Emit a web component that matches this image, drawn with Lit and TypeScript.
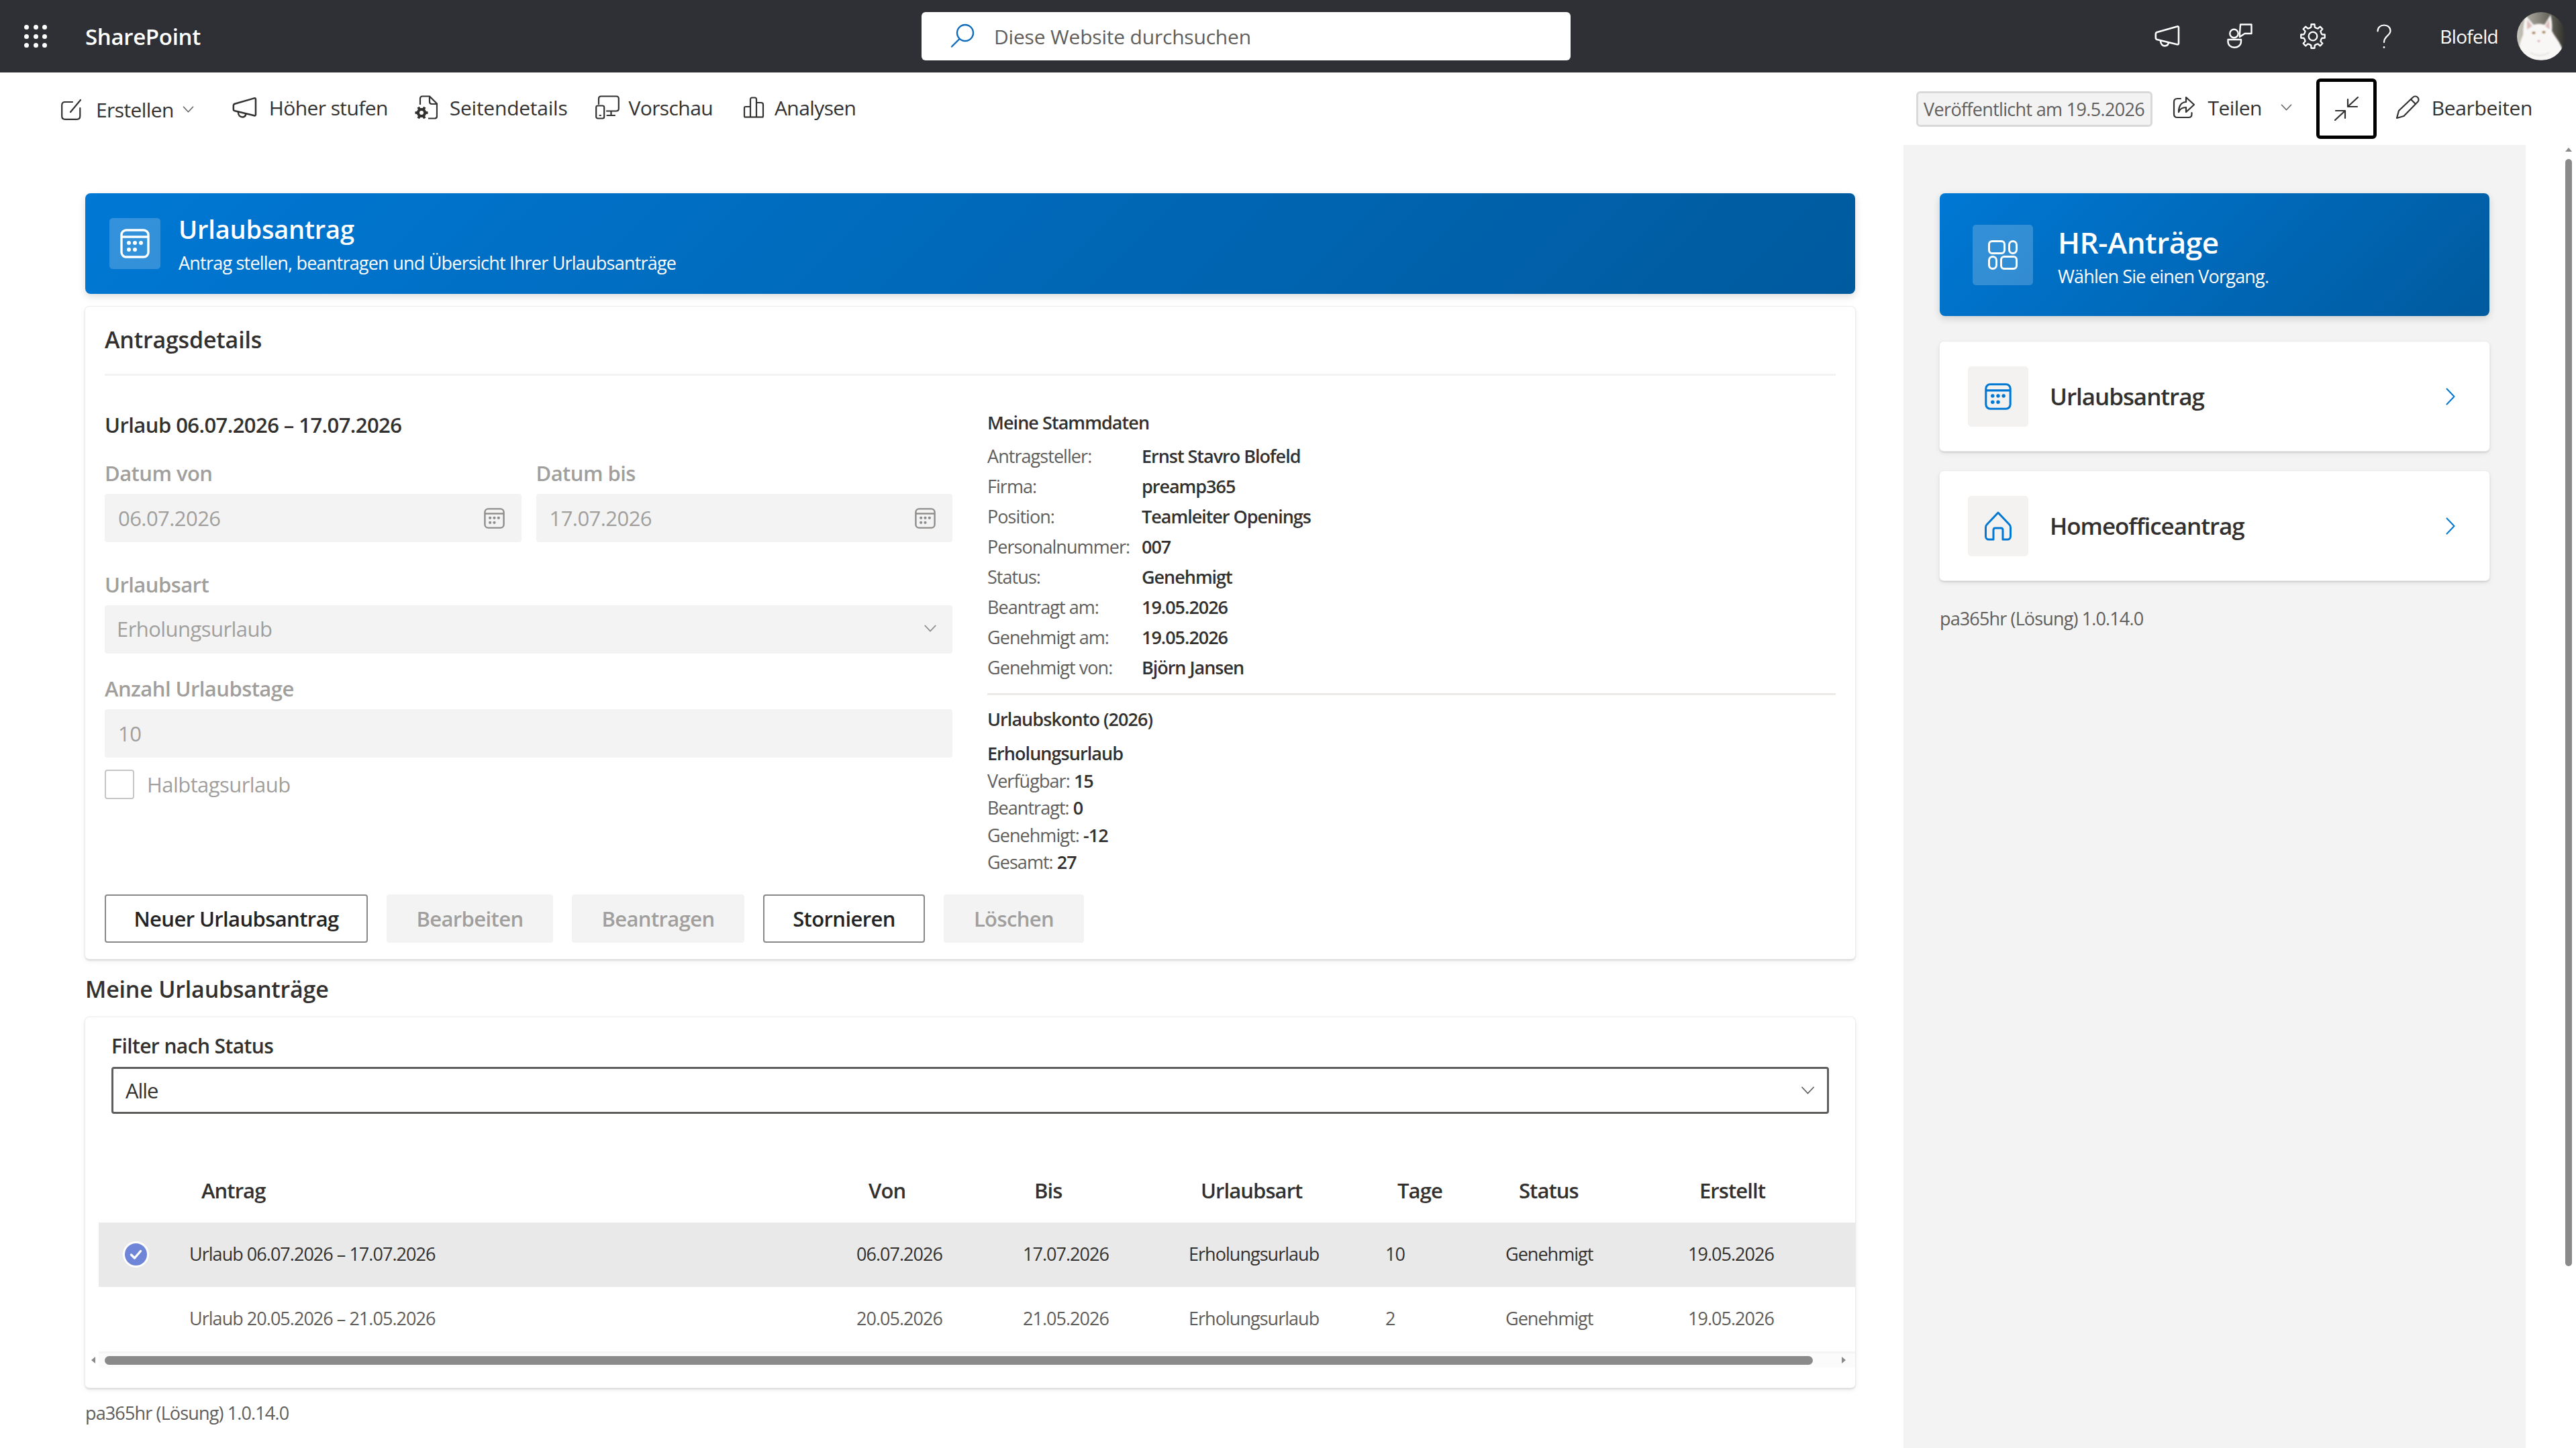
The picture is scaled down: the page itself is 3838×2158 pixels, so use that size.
import { LitElement, html, css } from "lit";
import { customElement } from "lit/decorators.js";

const gearPath = (cx: number, cy: number, teeth: number, r1: number, r2: number) => {
  let d = "";
  const st = (Math.PI * 2) / teeth;
  for (let i = 0; i < teeth; i++) {
    const a = i * st;
    const pts: [number, number][] = [
      [a - st * 0.5, r1], [a - st * 0.26, r1 + (r2 - r1) * 0.1], [a - st * 0.18, r2], [a + st * 0.18, r2], [a + st * 0.26, r1 + (r2 - r1) * 0.1],
    ];
    pts.forEach(([t, r], j) => {
      d += `${i === 0 && j === 0 ? "M" : "L"}${(cx + r * Math.cos(t)).toFixed(1)} ${(cy + r * Math.sin(t)).toFixed(1)} `;
    });
  }
  return d + "Z";
};

const cal = (cls: string) => html`<svg class=${cls} viewBox="0 0 44 44" fill="none">
  <rect x="2" y="2" width="40" height="40" rx="7" stroke="currentColor" stroke-width="3.4"/>
  <path d="M2 12H42" stroke="currentColor" stroke-width="3.4"/>
  <g fill="currentColor"><circle cx="13" cy="21" r="3"/><circle cx="22" cy="21" r="3"/><circle cx="31" cy="21" r="3"/><circle cx="13" cy="31" r="3"/><circle cx="22" cy="31" r="3"/></g>
</svg>`;

const chevDown = (cls: string) => html`<svg class=${cls} viewBox="0 0 20 12" fill="none"><path d="M1.5 1.5L10 10.5L18.5 1.5" stroke="currentColor" stroke-width="1.8" stroke-linecap="round" stroke-linejoin="round"/></svg>`;

const megaphone = (cls: string) => html`<svg class=${cls} viewBox="0 0 38 32" fill="none" stroke="currentColor" stroke-width="2.6" stroke-linejoin="round" stroke-linecap="round">
  <path d="M36 3V26.5C36 27.8 35 28.5 33.8 28.2L4 21C2.6 20.6 1.8 19.6 1.8 18.2V12.8C1.8 11.5 2.6 10.5 3.8 10.1L33.8 1.4C35 1.1 36 1.8 36 3Z"/>
  <path d="M9 22.5C9 27.5 12 30.4 15.5 30.4C18.5 30.4 20.5 28.5 21 25.5"/>
</svg>`;

@customElement("app-root")
export class AppRoot extends LitElement {
  static styles = css`
    :host { display: block; width: 3838px; height: 2158px; overflow: hidden; position: relative; background: #fff;
      font-family: "Open Sans", "Noto Sans", "Liberation Sans", sans-serif; color: #323130; letter-spacing: -0.012em; }
    svg { display: block; flex: none; }
    .topbar { height: 108px; background: #2e3036; display: flex; align-items: center; color: #fff; position: relative; }
    .waffle { margin-left: 36px; width: 34px; height: 34px; display: grid; grid-template-columns: repeat(3, 7px); grid-auto-rows: 7px; justify-content: space-between; align-content: space-between; }
    .waffle i { background: #fff; border-radius: 50%; }
    .brand { margin-left: 57px; font-size: 33px; font-weight: 600; letter-spacing: -0.01em; }
    .search { position: absolute; left: 1373px; top: 18px; width: 967px; height: 72px; background: #fff; border-radius: 6px; display: flex; align-items: center; color: #605e5c; font-size: 30px; box-sizing: border-box; padding-left: 42px; }
    .search .ic { width: 38px; height: 38px; color: #0f6cbd; margin-right: 28px; }
    .top-right { margin-left: auto; display: flex; align-items: center; padding-right: 16px; }
    .tr-mega { width: 38px; height: 32px; }
    .tr-person { width: 38px; height: 38px; margin-left: 70px; }
    .tr-gear { width: 38px; height: 38px; margin-left: 71px; }
    .tr-q { width: 22px; height: 37px; margin-left: 76px; }
    .user { font-size: 28px; margin-left: 72px; letter-spacing: -0.024em; }
    .avatar { width: 72px; height: 72px; margin-left: 28px; border-radius: 50%; overflow: hidden; }

    .cmd { height: 108px; display: flex; align-items: center; font-size: 30px; letter-spacing: -0.02em; position: relative; }
    .cmd-left { display: flex; align-items: center; padding-left: 91px; position: relative; top: -2px; }
    .ci { display: flex; align-items: center; color: #323130; }
    .ci svg.i { color: #323130; }
    .ci.c1 { position: relative; top: 3px; }
    .i-edit { width: 30px; height: 32px; margin-right: 22px; }
    .i-mega { width: 37px; height: 31px; margin-right: 18px; }
    .i-doc { width: 34px; height: 36px; margin-right: 18px; }
    .i-dev { width: 36px; height: 36px; margin-right: 13px; }
    .i-chart { width: 32px; height: 32px; margin-right: 15px; }
    .c1 { margin-right: 57px; } .c2 { margin-right: 40px; } .c3 { margin-right: 42px; letter-spacing: -0.008em; } .c4 { margin-right: 45px; }
    .dn { width: 17px; height: 10px; margin-left: 13px; color: #605e5c; }
    .cmd-right { margin-left: auto; display: flex; align-items: center; position: relative; top: -2px; }
    .badge { width: 352px; height: 53px; box-sizing: border-box; border: 3px solid #d9d9d9; background: #f3f3f3; border-radius: 6px; font-size: 27px; letter-spacing: -0.025em; color: #5f5f5f; display: flex; align-items: center; justify-content: center; white-space: nowrap; margin-right: 30px; position: relative; top: 2px; }
    .i-share { width: 34px; height: 34px; margin-right: 19px; }
    .focus { width: 90px; height: 90px; box-sizing: border-box; border: 5px solid #000; border-radius: 6px; display: flex; align-items: center; justify-content: center; margin: 0 28px 0 36px; position: relative; top: 2px; }
    .i-coll { width: 36px; height: 36px; }
    .i-pencil { width: 36px; height: 36px; margin-right: 18px; }
    .cmd-right .dn { margin-left: 28px; }
    .edit-label { letter-spacing: -0.012em; }
    .cmd-end { width: 65px; }

    .content { display: grid; grid-template-columns: 2836px 927px; height: 1942px; }
    .main { padding: 72px 72px 0 127px; display: flex; flex-direction: column; }
    .side { background: #f3f3f3; padding: 72px 54px 0 54px; display: flex; flex-direction: column; }

    .banner { background: linear-gradient(135deg, #0078d4, #005a9e); border-radius: 8px; color: #fff; box-shadow: 0 4px 12px rgba(0,0,0,.14); display: flex; align-items: center; }
    .banner.big { height: 150px; padding-left: 36px; gap: 27px; }
    .banner .box { background: rgba(255,255,255,.2); border-radius: 5px; display: flex; align-items: center; justify-content: center; }
    .big .box { width: 76px; height: 76px; }
    .big .ic { width: 44px; height: 44px; }
    .b-title { font-weight: 600; }
    .big .b-title { font-size: 38px; line-height: 48px; }
    .big .b-sub { font-size: 27px; line-height: 36px; margin-top: 9px; letter-spacing: -0.029em; }

    .card { background: #fff; border-radius: 6px; box-shadow: 0 0 0 1px #ececec, 0 2px 3px rgba(0,0,0,.16), 0 3px 8px rgba(0,0,0,.08); }
    .details { margin-top: 19px; height: 972px; box-sizing: border-box; padding: 0 29px; display: flex; flex-direction: column; }
    .d-title { height: 103px; box-sizing: border-box; border-bottom: 3px solid #f3f3f3; font-size: 34px; font-weight: 600; display: flex; align-items: center; padding-bottom: 2px; flex: none; }
    .d-cols { display: grid; grid-template-columns: 1263px 1fr; column-gap: 52px; flex: 1; }
    .d-left { display: flex; flex-direction: column; letter-spacing: -0.035em; }
    .req { font-size: 31px; font-weight: 600; margin-top: 52px; line-height: 42px; }
    .flab { font-size: 31px; font-weight: 600; color: #a19f9d; line-height: 42px; }
    .two { display: grid; grid-template-columns: 620.5px 620.5px; column-gap: 22px; margin-top: 30px; }
    .inp { height: 72px; background: #f3f3f3; border-radius: 4px; margin-top: 10px; display: flex; align-items: center; padding: 0 25px 0 20px; color: #a19f9d; font-size: 31px; justify-content: space-between; box-sizing: border-box; }
    .inp .c { width: 31px; height: 33px; color: #8f8d8b; }
    .inp .d { width: 20px; height: 11px; color: #8f8d8b; margin-right: -2px; }
    .inp.sel { padding-bottom: 3px; padding-left: 18px; }
    .mt40 { margin-top: 42px; }
    .mt32 { margin-top: 31px; }
    .chk { display: flex; align-items: center; gap: 19px; margin-top: 18px; color: #a19f9d; font-size: 31px; }
    .chk i { width: 44px; height: 44px; box-sizing: border-box; border: 2px solid #c8c6c4; border-radius: 4px; }
    .d-right { font-size: 27px; padding-top: 47px; letter-spacing: -0.035em; }
    .rh { font-weight: 600; line-height: 45px; }
    .kv { display: grid; grid-template-columns: 230px 1fr; grid-auto-rows: 45px; align-items: center; margin-top: 5px; }
    .kv span { color: #605e5c; white-space: nowrap; }
    .kv b { font-weight: 600; letter-spacing: -0.038em; }
    .sep { height: 3px; background: #edebe9; margin: 16px 0 13px; }
    .uk { line-height: 40.5px; }
    .uk div { color: #605e5c; }
    .uk b { font-weight: 600; color: #323130; }
    .uk .h { font-weight: 600; color: #323130; margin-top: 9px; }
    .btns { display: flex; gap: 28px; padding-bottom: 24px; letter-spacing: -0.038em; }
    .btn { height: 72px; box-sizing: border-box; border-radius: 4px; font-size: 31px; font-weight: 600; display: flex; align-items: center; justify-content: center; }
    .btn.on { background: #fff; border: 2.5px solid #8a8886; color: #242424; }
    .btn.off { background: #f3f3f3; color: #a19f9d; }

    .list-h { font-size: 34px; font-weight: 600; margin-top: 22px; line-height: 46px; }
    .list { margin-top: 19px; height: 552px; position: relative; padding-left: 39px; padding-right: 39px; box-sizing: border-box; }
    .f-lab { font-size: 30px; font-weight: 600; padding-top: 22px; line-height: 42px; letter-spacing: -0.02em; }
    .f-sel { margin-top: 10px; height: 70px; border: 3px solid #605e5c; border-radius: 4px; box-sizing: border-box; display: flex; align-items: center; justify-content: space-between; padding: 0 18px; font-size: 31px; letter-spacing: -0.035em; }
    .f-sel svg { width: 21px; height: 12px; color: #605e5c; }
    .table { position: absolute; left: 20px; right: 0; top: 230px; }
    .tr { display: grid; grid-template-columns: 135px 994px 248px 247px 293px 179px 272px 1fr; }
    .th { height: 76px; padding-bottom: 20px; box-sizing: border-box; align-items: center; font-size: 31px; font-weight: 600; color: #323130; letter-spacing: -0.03em; }
    .th div:nth-child(2) { padding-left: 18px; } .th div:nth-child(3) { padding-left: 18px; } .th div:nth-child(4) { padding-left: 17px; }
    .th div:nth-child(5) { padding-left: 18px; } .th div:nth-child(6) { padding-left: 18px; } .th div:nth-child(7) { padding-left: 20px; } .th div:nth-child(8) { padding-left: 17px; }
    .row { height: 96px; padding-bottom: 4px; box-sizing: border-box; align-items: center; font-size: 27px; color: #605e5c; letter-spacing: -0.036em; }
    .row.sel { background: #e9e9e9; color: #323130; }
    .row > div { white-space: nowrap; }
    .tick { width: 39px; height: 39px; margin-left: 36px; margin-top: 3px; }
    .hs { position: absolute; left: 20px; right: 0; top: 498px; height: 24px; border-top: 3px solid #f5f5f5; background: #fbfbfb; display: flex; align-items: center; box-sizing: border-box; }
    .hs .th-b { position: absolute; top: 4px; height: 13px; width: 2545px; left: 9px; background: #8a8a8a; border-radius: 7px; }
    .arr { position: absolute; top: 5px; width: 0; height: 0; border-top: 5px solid transparent; border-bottom: 5px solid transparent; }
    .arr.l { left: -11px; border-right: 6px solid #8a8a8a; }
    .arr.r { right: 14px; border-left: 6px solid #8a8a8a; }
    .ver { font-size: 27px; color: #605e5c; letter-spacing: -0.032em; }
    .main .ver { margin-top: 19px; line-height: 38px; }

    .banner.hr { height: 183px; padding-left: 49px; gap: 37px; border-radius: 8px; }
    .hr .box { width: 90px; height: 90px; }
    .hr .ic { width: 44px; height: 44px; }
    .hr .b-title { font-size: 44px; line-height: 56px; margin-top: 3px; letter-spacing: -0.01em; }
    .hr .b-sub { font-size: 27px; line-height: 36px; margin-top: 5px; letter-spacing: -0.03em; }
    .link { height: 163px; display: flex; align-items: center; padding: 0 51px 0 42px; margin-top: 38px; font-size: 35px; font-weight: 600; letter-spacing: -0.03em; }
    .link + .link { margin-top: 30px; }
    .link .box { width: 90px; height: 90px; background: #f3f2f1; border-radius: 5px; display: flex; align-items: center; justify-content: center; color: #0078d4; margin-right: 32px; }
    .link .box svg { width: 40px; height: 44px; }
    .link .go { margin-left: auto; width: 14px; height: 26px; color: #0078d4; }
    .side .ver { margin-top: 38px; line-height: 38px; }

    .vs { position: absolute; right: 6px; top: 220px; width: 10px; }
    .vs i { display: block; width: 0; height: 0; border-left: 5px solid transparent; border-right: 5px solid transparent; border-bottom: 6px solid #8a8a8a; }
    .vs b { display: block; margin-top: 11px; width: 10px; height: 1650px; border-radius: 5px; background: #8a8a8a; }
  `;

  render() {
    const row = (sel: boolean, a: string, v: string, b: string, t: string) => html`
      <div class="tr row ${sel ? "sel" : ""}">
        <div>${sel ? html`<svg class="tick" viewBox="0 0 39 39"><circle cx="19.5" cy="19.5" r="18" fill="#6f86d8" stroke="#fff" stroke-width="3"/><path d="M12.5 20L17.5 25L26.5 14.5" fill="none" stroke="#fff" stroke-width="3.4" stroke-linecap="round" stroke-linejoin="round"/></svg>` : ""}</div>
        <div>${a}</div><div>${v}</div><div>${b}</div><div>Erholungsurlaub</div><div>${t}</div><div>Genehmigt</div><div>19.05.2026</div>
      </div>`;
    return html`
      <div class="topbar">
        <div class="waffle">${Array.from({ length: 9 }, () => html`<i></i>`)}</div>
        <div class="brand">SharePoint</div>
        <div class="search">
          <svg class="ic" viewBox="0 0 38 38" fill="none" stroke="currentColor" stroke-width="2.4" stroke-linecap="round"><circle cx="23" cy="14" r="12"/><path d="M14.5 23L3 34.5"/></svg>
          Diese Website durchsuchen
        </div>
        <div class="top-right">
          ${megaphone("tr-mega")}
          <svg class="tr-person" viewBox="0 0 38 38" fill="none" stroke="currentColor" stroke-width="2.4" stroke-linejoin="round"><circle cx="10.5" cy="15" r="6.2"/><path d="M1.5 24H21V27C21 32.5 16 35.8 11 35.8C6 35.8 1.5 32.5 1.5 27Z"/><path d="M20 1.5H36.5V15H26.5L19 20V15.5Z"/></svg>
          <svg class="tr-gear" viewBox="0 0 36 36" fill="none" stroke="currentColor" stroke-width="2.2" stroke-linejoin="round"><path d=${gearPath(18, 18, 8, 12.5, 17)}/><circle cx="18" cy="18" r="6"/></svg>
          <svg class="tr-q" viewBox="0 0 22 37" fill="none" stroke="currentColor" stroke-width="2.2" stroke-linecap="round"><path d="M1.5 10.5C1.5 5 5.5 1.5 11 1.5C16.5 1.5 20.5 5 20.5 10C20.5 17 11 17.5 11 27"/><circle cx="11" cy="34.5" r="1.4" fill="currentColor" stroke="none"/></svg>
          <div class="user">Blofeld</div>
          <svg class="avatar" viewBox="0 0 72 72">
            <defs>
              <filter id="bl"><feGaussianBlur stdDeviation=".8"/></filter>
              <linearGradient id="bg" x1="0" x2="1" y1="0" y2="0"><stop offset="0" stop-color="#c9c7bd"/><stop offset=".5" stop-color="#7f7d74"/><stop offset=".78" stop-color="#55544c"/><stop offset="1" stop-color="#2f2f2a"/></linearGradient>
            </defs>
            <rect width="72" height="72" fill="url(#bg)"/>
            <rect x="0" y="52" width="8" height="14" fill="#5f8a55"/>
            <g filter="url(#bl)">
              <path d="M13 5L25 19C30 17 36 17 41 19L50 4C52 12 53 20 52 28C56 36 64 44 68 56L68 72H4C2 60 3 46 9 34C9 24 10 14 13 5Z" fill="#f8f7f6"/>
              <path d="M15 11L23 21L15 26Z M48 10L42 21L49 26Z" fill="#dcbdbb"/>
              <ellipse cx="25" cy="31" rx="2.6" ry="2" fill="#a3763f"/><ellipse cx="40" cy="30" rx="2.6" ry="2" fill="#a3763f"/>
              <path d="M30 42H35L32.5 45.5Z" fill="#d99a9a"/>
              <path d="M20 60C28 66 40 66 48 60" stroke="#e4e2df" stroke-width="2" fill="none"/>
            </g>
          </svg>
        </div>
      </div>

      <div class="cmd">
        <div class="cmd-left">
          <div class="ci c1">
            <svg class="i i-edit" viewBox="0 0 30 32" fill="none" stroke="currentColor" stroke-width="2.2" stroke-linecap="round" stroke-linejoin="round"><path d="M17 5H6C3 5 1.2 6.8 1.2 9.5V26C1.2 29 3 30.8 6 30.8H23.5C26.5 30.8 28.3 29 28.3 26V14"/><path d="M14 20L29 2"/></svg>
            Erstellen ${chevDown("dn")}
          </div>
          <div class="ci c2">${megaphone("i i-mega")} Höher stufen</div>
          <div class="ci c3">
            <svg class="i i-doc" viewBox="0 0 34 36" fill="none" stroke="currentColor" stroke-width="2.2" stroke-linejoin="round"><path d="M8 14V5C8 3 9.5 1.5 11.5 1.5H22L33 12.5V31C33 33 31.5 34.5 29.5 34.5H20"/><path d="M22 2V9.5C22 11.5 23.5 13 25.5 13H33"/><path d=${gearPath(10, 26, 6, 7, 9.8)} fill="currentColor" stroke="none"/><circle cx="10" cy="26" r="3" fill="#fff"  stroke="none"/></svg>
            Seitendetails
          </div>
          <div class="ci c4">
            <svg class="i i-dev" viewBox="0 0 36 36" fill="none" stroke="currentColor" stroke-width="2.2" stroke-linejoin="round" stroke-linecap="round"><path d="M5 13V5C5 2.8 6.5 1.5 8.5 1.5H31C33.2 1.5 34.8 3 34.8 5V20C34.8 22 33.2 23.5 31 23.5H17"/><path d="M23.5 24V30M17.5 30H29"/><rect x="1.2" y="15.5" width="12" height="19" rx="2.5"/><path d="M6.5 30H8"/></svg>
            Vorschau
          </div>
          <div class="ci">
            <svg class="i i-chart" viewBox="0 0 32 32" fill="none" stroke="currentColor" stroke-width="2.2" stroke-linejoin="round"><path d="M2 30V17C2 15.5 3 15 4 15H11"/><path d="M11 30V4C11 2.5 12 1.5 13.5 1.5H17.5C19 1.5 20 2.5 20 4V30"/><path d="M20 9H27C29 9 30 10 30 12V30"/><path d="M1.5 30.5H30.5"/></svg>
            Analysen
          </div>
        </div>
        <div class="cmd-right">
          <div class="badge">Veröffentlicht am 19.5.2026</div>
          <svg class="i-share" viewBox="0 0 34 34" fill="none" stroke="#323130" stroke-width="2.2" stroke-linejoin="round" stroke-linecap="round"><path d="M12 4H7C4 4 2 6 2 9V27C2 30 4 32 7 32H24C27 32 28.5 30 28.5 27V25"/><path d="M20 2L32 13L20 24V17C15 17 11 19 9 24C9 15 13 9 20 9Z"/></svg>
          <span>Teilen</span>${chevDown("dn")}
          <div class="focus">
            <svg class="i-coll" viewBox="0 0 36 36" fill="none" stroke="#323130" stroke-width="2.2" stroke-linecap="round" stroke-linejoin="round"><path d="M35 1L20 15M20 4V15H34"/><path d="M1 35L16 21M2 21H16V32"/></svg>
          </div>
          <svg class="i-pencil" viewBox="0 0 36 36" fill="none" stroke="#323130" stroke-width="2.2" stroke-linejoin="round"><path d="M2 34L5 23L26 3C28 1 31 1 33 3C35 5 35 8 33 10L12.5 31Z"/><path d="M23 6L30 13"/></svg>
          <span class="edit-label">Bearbeiten</span>
          <div class="cmd-end"></div>
        </div>
      </div>

      <div class="content">
        <div class="main">
          <div class="banner big">
            <div class="box">${cal("ic")}</div>
            <div><div class="b-title">Urlaubsantrag</div><div class="b-sub">Antrag stellen, beantragen und Übersicht Ihrer Urlaubsanträge</div></div>
          </div>
          <div class="card details">
            <div class="d-title">Antragsdetails</div>
            <div class="d-cols">
              <div class="d-left">
                <div class="req">Urlaub 06.07.2026 – 17.07.2026</div>
                <div class="two">
                  <div><div class="flab">Datum von</div><div class="inp">06.07.2026 ${cal("c")}</div></div>
                  <div><div class="flab">Datum bis</div><div class="inp">17.07.2026 ${cal("c")}</div></div>
                </div>
                <div class="flab mt40">Urlaubsart</div>
                <div class="inp sel">Erholungsurlaub ${chevDown("d")}</div>
                <div class="flab mt32">Anzahl Urlaubstage</div>
                <div class="inp">10</div>
                <div class="chk"><i></i>Halbtagsurlaub</div>
              </div>
              <div class="d-right">
                <div class="rh">Meine Stammdaten</div>
                <div class="kv">
                  <span>Antragsteller:</span><b>Ernst Stavro Blofeld</b>
                  <span>Firma:</span><b>preamp365</b>
                  <span>Position:</span><b>Teamleiter Openings</b>
                  <span>Personalnummer:</span><b>007</b>
                  <span>Status:</span><b>Genehmigt</b>
                  <span>Beantragt am:</span><b>19.05.2026</b>
                  <span>Genehmigt am:</span><b>19.05.2026</b>
                  <span>Genehmigt von:</span><b>Björn Jansen</b>
                </div>
                <div class="sep"></div>
                <div class="rh">Urlaubskonto (2026)</div>
                <div class="uk">
                  <div class="h">Erholungsurlaub</div>
                  <div>Verfügbar: <b>15</b></div>
                  <div>Beantragt: <b>0</b></div>
                  <div>Genehmigt: <b>-12</b></div>
                  <div>Gesamt: <b>27</b></div>
                </div>
              </div>
            </div>
            <div class="btns">
              <div class="btn on" style="width:392px">Neuer Urlaubsantrag</div>
              <div class="btn off" style="width:248px">Bearbeiten</div>
              <div class="btn off" style="width:257px">Beantragen</div>
              <div class="btn on" style="width:241px">Stornieren</div>
              <div class="btn off" style="width:209px">Löschen</div>
            </div>
          </div>
          <div class="list-h">Meine Urlaubsanträge</div>
          <div class="card list">
            <div class="f-lab">Filter nach Status</div>
            <div class="f-sel">Alle ${chevDown("")}</div>
            <div class="table">
              <div class="tr th"><div></div><div>Antrag</div><div>Von</div><div>Bis</div><div>Urlaubsart</div><div>Tage</div><div>Status</div><div>Erstellt</div></div>
              ${row(true, "Urlaub 06.07.2026 – 17.07.2026", "06.07.2026", "17.07.2026", "10")}
              ${row(false, "Urlaub 20.05.2026 – 21.05.2026", "20.05.2026", "21.05.2026", "2")}
            </div>
            <div class="hs"><i class="arr l"></i><div class="th-b"></div><i class="arr r"></i></div>
          </div>
          <div class="ver">pa365hr (Lösung) 1.0.14.0</div>
        </div>
        <div class="side">
          <div class="banner hr">
            <div class="box">
              <svg class="ic" viewBox="0 0 44 44" fill="none" stroke="#fff" stroke-width="3"><rect x="1.5" y="1.5" width="23" height="18" rx="4.5"/><rect x="31.5" y="1.5" width="11" height="18" rx="5.5"/><rect x="1.5" y="24.5" width="11" height="18" rx="5.5"/><rect x="19.5" y="24.5" width="23" height="18" rx="4.5"/></svg>
            </div>
            <div><div class="b-title">HR-Anträge</div><div class="b-sub">Wählen Sie einen Vorgang.</div></div>
          </div>
          <div class="card link">
            <div class="box">${cal("")}</div>
            Urlaubsantrag
            <svg class="go" viewBox="0 0 14 26" fill="none" stroke="currentColor" stroke-width="2" stroke-linecap="round" stroke-linejoin="round"><path d="M1.5 1.5L12.5 13L1.5 24.5"/></svg>
          </div>
          <div class="card link">
            <div class="box"><svg viewBox="0 0 40 44" fill="none" stroke="currentColor" stroke-width="3" stroke-linejoin="round"><path d="M20 2L37 20C38 21 38.5 22 38.5 24V37C38.5 40 36.5 42 34 42H27V28C27 26 26 25 24.5 25H15.5C14 25 13 26 13 28V42H6C3.5 42 1.5 40 1.5 37V24C1.5 22 2 21 3 20Z"/></svg></div>
            Homeofficeantrag
            <svg class="go" viewBox="0 0 14 26" fill="none" stroke="currentColor" stroke-width="2" stroke-linecap="round" stroke-linejoin="round"><path d="M1.5 1.5L12.5 13L1.5 24.5"/></svg>
          </div>
          <div class="ver">pa365hr (Lösung) 1.0.14.0</div>
        </div>
      </div>
      <div class="vs"><i></i><b></b></div>
    `;
  }
}
